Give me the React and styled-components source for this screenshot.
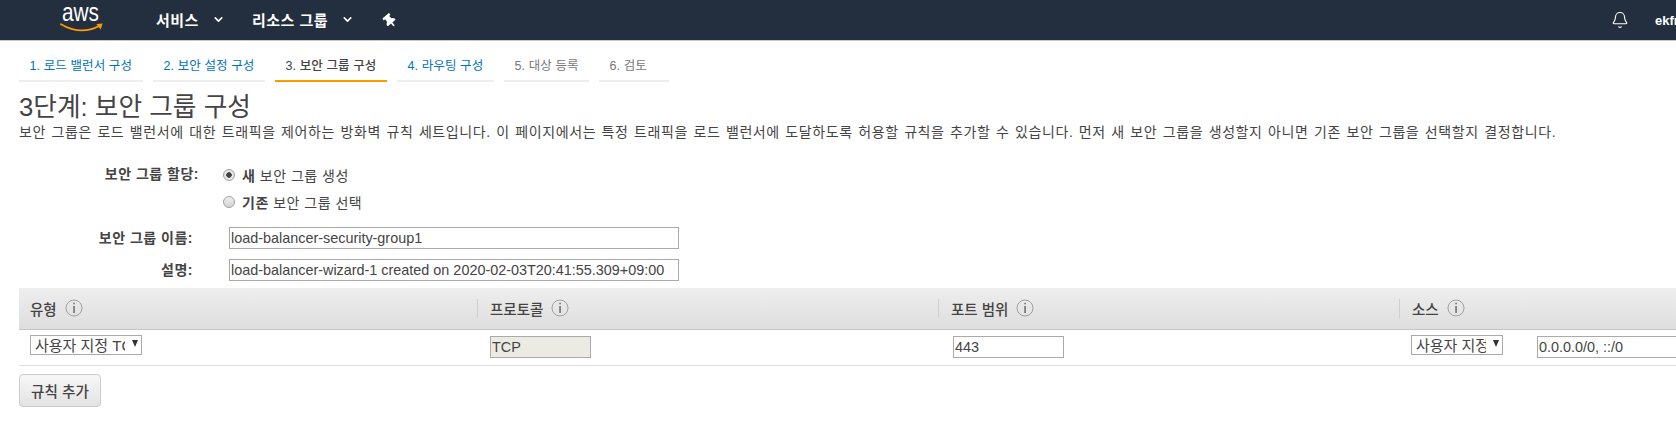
import React from 'react';
import styled, { createGlobalStyle } from 'styled-components';
import { Bell, ChevronDown } from 'lucide-react';
import { FaThumbtack } from 'react-icons/fa';

const FONT = `"Liberation Sans", "Noto Sans CJK KR", sans-serif`;

const GlobalStyle = createGlobalStyle`
  html, body { margin: 0; padding: 0; background: #fff; overflow: hidden; }
  body { font-family: ${FONT}; color: #444; }
  * { box-sizing: border-box; }
`;

const Page = styled.div`
  width: 1676px;
  height: 434px;
  overflow: hidden;
`;

const TopBar = styled.header`
  display: flex;
  align-items: center;
  height: 41px;
  padding-left: 60px;
  background: #232f3e;
  border-bottom: 1px solid #c9c9c9;
  color: #fff;
  overflow: hidden;
`;

const Logo = styled.svg`
  align-self: flex-start;
  width: 44px;
  height: 34px;
  margin-right: 52px;
  flex: none;
  overflow: visible;
`;

const NavItem = styled.div`
  display: flex;
  align-items: center;
  gap: 13px;
  margin-right: ${p => p.$after}px;
  font-size: 15px;
  font-weight: 700;
  letter-spacing: 0.5px;
  white-space: nowrap;
  margin-top: -2px;
`;

const PinIcon = styled(FaThumbtack)`
  width: 12px;
  height: 14px;
  transform: rotate(-40deg);
  margin-top: 1px;
`;

const BellButton = styled.div`
  display: flex;
  margin-left: auto;
  margin-right: 26px;
  margin-top: -1px;
`;

const UserName = styled.div`
  flex: none;
  width: 21px;
  font-size: 13px;
  font-weight: 700;
  white-space: nowrap;
`;

const Tabs = styled.nav`
  display: flex;
  gap: 10px;
  padding: 17px 0 0 19px;
`;

const Tab = styled.div`
  width: ${p => p.$width}px;
  height: 24px;
  padding-left: 10.5px;
  font-size: 12.5px;
  letter-spacing: 0.1px;
  line-height: 16px;
  white-space: nowrap;
  border-bottom: 2px solid ${p => (p.$state === 'active' ? '#f90' : '#eee')};
  color: ${p => (p.$state === 'link' ? '#0073bb' : p.$state === 'active' ? '#444' : '#777')};
  font-weight: ${p => (p.$state === 'active' ? 500 : 400)};
`;

const Title = styled.h1`
  margin: 11px 0 2px 19px;
  font-size: 25.7px;
  line-height: 28px;
  font-weight: 400;
  color: #444;
`;

const Description = styled.p`
  margin: 0 0 0 19px;
  font-size: 14px;
  line-height: 18px;
  letter-spacing: 0.6px;
  word-spacing: 1px;
  white-space: nowrap;
`;

const Form = styled.div`
  display: grid;
  grid-template-columns: 199px 1fr;
  margin-top: 20px;
`;

const Label = styled.div`
  justify-self: end;
  margin-right: ${p => p.$inset || 0}px;
  height: ${p => p.$height}px;
  line-height: ${p => p.$height}px;
  font-size: 14px;
  letter-spacing: 0.5px;
  font-weight: 700;
  color: #444;
  white-space: nowrap;
`;

const RadioRow = styled.label`
  display: flex;
  align-items: center;
  gap: 7px;
  height: 27px;
  padding-left: 24px;
  font-size: 14px;
  letter-spacing: 0.5px;
  color: #444;
  b { font-weight: 700; }
`;

const Radio = styled.input.attrs({ type: 'radio', readOnly: true })`
  appearance: none;
  width: 12px;
  height: 12px;
  margin: 0;
  border: 1px solid #a0a0a0;
  border-radius: 50%;
  background: ${p =>
    p.checked ? 'radial-gradient(circle, #444 0 2.5px, #e6e6e6 3px)' : 'linear-gradient(#eee, #d4d4d4)'};
`;

const FieldList = styled.div`
  display: grid;
  grid-template-columns: 199px 1fr;
  row-gap: 10px;
  margin-top: 12px;
`;

const FieldCell = styled.div`
  padding-left: 30px;
`;

const TextInput = styled.input.attrs({ readOnly: true })`
  display: block;
  width: ${p => p.$width}px;
  height: 22px;
  padding: 0 1px;
  border: 1px solid #aaa;
  border-radius: 0;
  outline: none;
  background: ${p => (p.$disabled ? '#ebebe4' : '#fff')};
  color: #444;
  font-family: ${FONT};
  font-size: 14.4px;
`;

const RuleTable = styled.div`
  margin: 7px 0 0 19px;
  width: 1900px;
`;

const Columns = styled.div`
  display: grid;
  grid-template-columns: 458px 461px 461px 1fr;
`;

const HeadRow = styled(Columns)`
  height: 42px;
  align-items: center;
  background: linear-gradient(#eeeeee, #dedede);
  border-bottom: 1px solid #c6c6c6;
`;

const HeadCell = styled.div`
  display: flex;
  align-items: center;
  gap: 8px;
  height: 19px;
  margin-top: -1px;
  padding-left: ${p => (p.$first ? 11 : 12)}px;
  border-left: ${p => (p.$first ? 'none' : '1px solid #cfcfcf')};
  font-size: 14.5px;
  font-weight: 500;
  color: #444;
`;

const InfoMark = styled.svg`
  width: 18px;
  height: 18px;
  flex: none;
`;

const BodyRow = styled(Columns)`
  height: 36px;
  padding-top: 6px;
  border-bottom: 1px solid #e1e1e1;
`;

const BodyCell = styled.div`
  display: flex;
  align-items: flex-start;
  gap: ${p => p.$gap || 0}px;
  padding-left: ${p => p.$left}px;
`;

const SelectWrap = styled.div`
  position: relative;
  flex: none;
  width: ${p => p.$width}px;
  height: 20px;
  margin-top: -1px;
`;

const Select = styled.select`
  appearance: none;
  display: block;
  width: 100%;
  height: 100%;
  padding: 0 16px 0 4px;
  border: 1px solid #aaa;
  border-radius: 0;
  background: #fff;
  color: #444;
  font-family: ${FONT};
  font-size: 15px;
`;

const SelectArrow = styled.span`
  position: absolute;
  right: 4px;
  top: 5px;
  width: 0;
  height: 0;
  border-left: 3.5px solid transparent;
  border-right: 3.5px solid transparent;
  border-top: 7px solid #333;
  pointer-events: none;
`;

const AddButton = styled.button`
  display: block;
  width: 82px;
  height: 33px;
  margin: 8px 0 0 19px;
  padding: 0;
  border: 1px solid #ccc;
  border-radius: 4px;
  background: linear-gradient(#f7f7f7, #e3e3e3);
  color: #444;
  font-family: ${FONT};
  font-size: 14.6px;
  font-weight: 500;
`;

const tabs = [
  { label: '1. 로드 밸런서 구성', width: 124, state: 'link' },
  { label: '2. 보안 설정 구성', width: 112, state: 'link' },
  { label: '3. 보안 그룹 구성', width: 112, state: 'active' },
  { label: '4. 라우팅 구성', width: 97, state: 'link' },
  { label: '5. 대상 등록', width: 85, state: 'off' },
  { label: '6. 검토', width: 70, state: 'off' },
];

const heads = ['유형', '프로토콜', '포트 범위', '소스'];

function AwsLogo() {
  return (
    <Logo viewBox="0 0 44 34">
      <text x="2" y="21" fill="#fff" fontFamily="Liberation Sans" fontSize="25" textLength="37" lengthAdjust="spacingAndGlyphs">aws</text>
      <path d="M1 24.2c7 4.2 14 6.2 21 6.2 6 0 11.5-1.5 16.5-4.2" fill="none" stroke="#f90" strokeWidth="1.8" strokeLinecap="round" />
      <path d="M36.3 24l6.3-.6-1.9 6z" fill="#f90" />
    </Logo>
  );
}

function Info() {
  return (
    <InfoMark viewBox="0 0 18 18">
      <circle cx="9" cy="9" r="8" fill="none" stroke="#a0a0a0" strokeWidth="1" />
      <rect x="8.4" y="7" width="1.3" height="7" fill="#555" />
      <rect x="8.4" y="3.8" width="1.3" height="1.5" fill="#555" />
    </InfoMark>
  );
}

function Dropdown({ width, value }) {
  return (
    <SelectWrap $width={width}>
      <Select defaultValue={value}>
        <option>{value}</option>
      </Select>
      <SelectArrow />
    </SelectWrap>
  );
}

export default function App() {
  return (
    <Page>
      <GlobalStyle />
      <TopBar>
        <AwsLogo />
        <NavItem $after={27}>서비스 <ChevronDown size={13} strokeWidth={3} /></NavItem>
        <NavItem $after={30}>리소스 그룹 <ChevronDown size={13} strokeWidth={3} /></NavItem>
        <PinIcon />
        <BellButton><Bell size={18} strokeWidth={1.5} /></BellButton>
        <UserName>ekfrko</UserName>
      </TopBar>

      <Tabs>
        {tabs.map(t => (
          <Tab key={t.label} $width={t.width} $state={t.state}>{t.label}</Tab>
        ))}
      </Tabs>

      <Title>3단계: 보안 그룹 구성</Title>
      <Description>
        보안 그룹은 로드 밸런서에 대한 트래픽을 제어하는 방화벽 규칙 세트입니다. 이 페이지에서는 특정 트래픽을 로드 밸런서에 도달하도록 허용할 규칙을 추가할 수 있습니다. 먼저 새 보안 그룹을 생성할지 아니면 기존 보안 그룹을 선택할지 결정합니다.
      </Description>

      <Form>
        <Label $height={27}>보안 그룹 할당:</Label>
        <RadioRow><Radio name="sg" checked /><span><b>새</b> 보안 그룹 생성</span></RadioRow>
        <div />
        <RadioRow><Radio name="sg" /><span><b>기존</b> 보안 그룹 선택</span></RadioRow>
      </Form>

      <FieldList>
        <Label $height={22} $inset={6}>보안 그룹 이름:</Label>
        <FieldCell><TextInput $width={450} defaultValue="load-balancer-security-group1" /></FieldCell>
        <Label $height={22} $inset={6}>설명:</Label>
        <FieldCell><TextInput $width={450} defaultValue="load-balancer-wizard-1 created on 2020-02-03T20:41:55.309+09:00" /></FieldCell>
      </FieldList>

      <RuleTable>
        <HeadRow>
          {heads.map((h, i) => (
            <HeadCell key={h} $first={i === 0}>{h}<Info /></HeadCell>
          ))}
        </HeadRow>
        <BodyRow>
          <BodyCell $left={11}><Dropdown width={112} value="사용자 지정 TCP" /></BodyCell>
          <BodyCell $left={13}><TextInput $width={101} $disabled defaultValue="TCP" /></BodyCell>
          <BodyCell $left={15}><TextInput $width={111} defaultValue="443" /></BodyCell>
          <BodyCell $left={12} $gap={34}>
            <Dropdown width={92} value="사용자 지정" />
            <TextInput $width={200} defaultValue="0.0.0.0/0, ::/0" />
          </BodyCell>
        </BodyRow>
      </RuleTable>

      <AddButton>규칙 추가</AddButton>
    </Page>
  );
}
